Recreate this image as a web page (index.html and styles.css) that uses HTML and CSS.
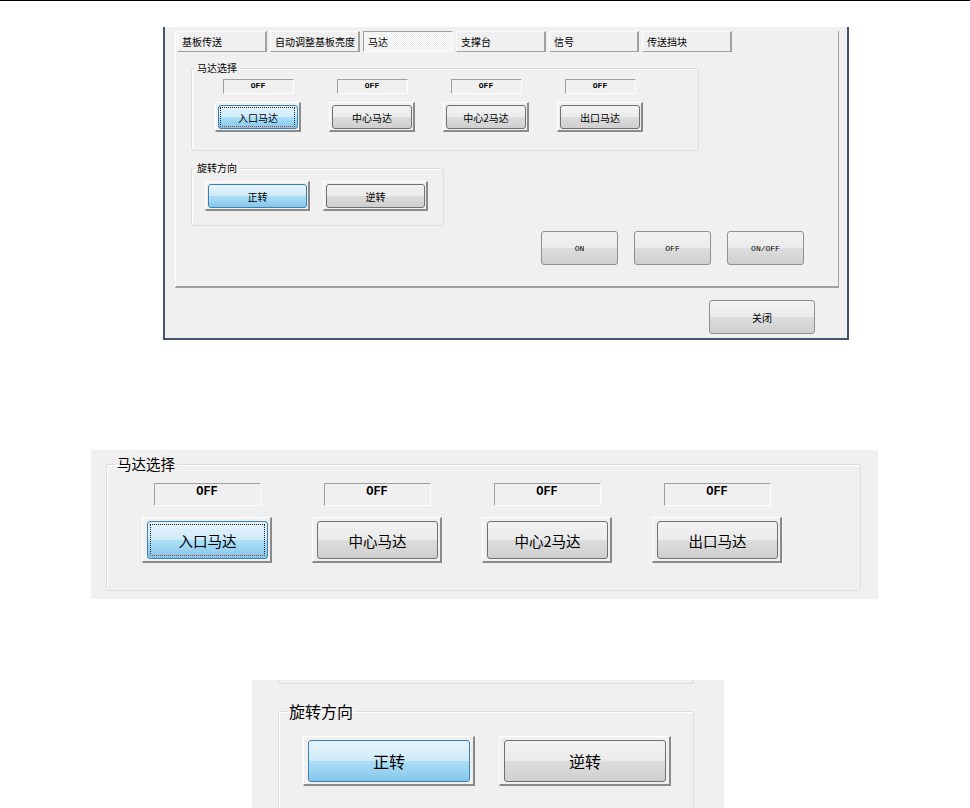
FILE: index.html
```html
<!DOCTYPE html>
<html lang="zh-CN">
<head>
  <meta charset="UTF-8" />
  <title>马达 设定</title>
  <meta name="viewport" content="width=device-width, initial-scale=1.0" />
  <link rel="stylesheet" href="styles.css">
</head>
<body>
  <div class="rule"></div>

  <div class="dialog">
    <div class="tabpanel">
      <div class="tabs">
        <div class="tab">基板传送</div>
        <div class="tab">自动调整基板亮度</div>
        <div class="tab active">马达</div>
        <div class="tab">支撑台</div>
        <div class="tab">信号</div>
        <div class="tab">传送挡块</div>
      </div>

      <div class="page">
        <fieldset class="group motor">
          <legend>马达选择</legend>
          <div class="motor-grid">
            <div class="col">
              <div class="state">OFF</div>
              <button type="button" class="fbtn on focus"><span>入口马达</span></button>
            </div>
            <div class="col">
              <div class="state">OFF</div>
              <button type="button" class="fbtn"><span>中心马达</span></button>
            </div>
            <div class="col">
              <div class="state">OFF</div>
              <button type="button" class="fbtn"><span>中心2马达</span></button>
            </div>
            <div class="col">
              <div class="state">OFF</div>
              <button type="button" class="fbtn"><span>出口马达</span></button>
            </div>
          </div>
        </fieldset>

        <fieldset class="group dir">
          <legend>旋转方向</legend>
          <div class="dir-row">
            <button type="button" class="fbtn on"><span>正转</span></button>
            <button type="button" class="fbtn"><span>逆转</span></button>
          </div>
        </fieldset>

        <div class="actions">
          <button type="button" class="btn mono">ON</button>
          <button type="button" class="btn mono">OFF</button>
          <button type="button" class="btn mono">ON/OFF</button>
        </div>
      </div>
    </div>

    <div class="footer">
      <button type="button" class="btn close">关闭</button>
    </div>
  </div>

  <!-- enlarged: motor select -->
  <div class="zoom zoom-motor">
    <fieldset class="group big">
      <legend>马达选择</legend>
      <div class="motor-grid">
        <div class="col">
          <div class="state">OFF</div>
          <button type="button" class="fbtn on focus"><span>入口马达</span></button>
        </div>
        <div class="col">
          <div class="state">OFF</div>
          <button type="button" class="fbtn"><span>中心马达</span></button>
        </div>
        <div class="col">
          <div class="state">OFF</div>
          <button type="button" class="fbtn"><span>中心2马达</span></button>
        </div>
        <div class="col">
          <div class="state">OFF</div>
          <button type="button" class="fbtn"><span>出口马达</span></button>
        </div>
      </div>
    </fieldset>
  </div>

  <!-- enlarged: rotation -->
  <div class="zoom zoom-dir">
    <div class="group-tail"></div>
    <fieldset class="group big">
      <legend>旋转方向</legend>
      <div class="dir-row">
        <button type="button" class="fbtn on"><span>正转</span></button>
        <button type="button" class="fbtn"><span>逆转</span></button>
      </div>
    </fieldset>
  </div>
</body>
</html>
```

FILE: styles.css
```css
* {
  box-sizing: border-box;
}
body {
  margin: 0;
  background: #fff;
  font-family: "Noto Sans CJK SC", "Noto Sans", sans-serif;
  color: #000;
}
button {
  font-family: inherit;
  color: #000;
  padding: 0;
  margin: 0;
  cursor: default;
}
.rule {
  height: 1px;
  background: #000;
}

/* dialog */
.dialog {
  margin: 26px 0 0 163px;
  padding-top: 4px;
  width: 686px;
  height: 313px;
  background: #f0f0f0;
  border: 2px solid #44546a;
  border-top: 0;
  font-size: 10px;
}
.tabpanel {
  margin-left: 10px;
  width: 664px;
  height: 257px;
  border-left: 1px solid #fff;
  border-right: 1px solid #a0a0a0;
  border-bottom: 2px solid #a0a0a0;
}
.tabs {
  display: flex;
  gap: 3px;
  padding-left: 1px;
}
.tab {
  width: 90px;
  height: 21px;
  line-height: 19px;
  padding-left: 4px;
  border: 1px solid #fff;
  border-right: 2px solid #a0a0a0;
  border-bottom: 1px solid #a0a0a0;
  white-space: nowrap;
}
.tab.active {
  border-color: #a0a0a0 #fff #fff #a0a0a0;
  border-width: 1px;
  background: repeating-conic-gradient(#fff 0 25%, #ececec 0 50%) 0 0 / 2px 2px;
}
.page {
  padding: 10px 0 0 15px;
}

/* group boxes */
.group {
  margin: 0;
  padding: 0;
  min-width: 0;
  border: 1px solid #d5dfe5;
  border-radius: 3px;
  box-shadow: inset 1px 1px #fff;
}
.group legend {
  padding: 0 2px;
  margin-left: 3px;
  line-height: 12px;
}
.motor {
  width: 508px;
  padding: 5px 0 18px;
}
.motor-grid {
  display: grid;
  grid-template-columns: repeat(4, 86px);
  column-gap: 28px;
  padding-left: 23px;
}
.col {
  display: flex;
  flex-direction: column;
  align-items: center;
  gap: 8px;
}
.state {
  width: 71px;
  height: 15px;
  border: 1px solid;
  border-color: #a0a0a0 #fff #fff #a0a0a0;
  text-align: center;
  font: bold 8px/11px "Liberation Mono", monospace;
}
.dir {
  width: 253px;
  margin-top: 11px;
  padding: 7px 0 14px;
}
.dir-row {
  display: flex;
  gap: 13px;
  padding-left: 13px;
}

/* framed buttons */
.fbtn {
  position: relative;
  display: flex;
  width: 86px;
  height: 30px;
  padding: 2px 1px 1px 2px;
  background: #f0f0f0;
  border: 1px solid;
  border-color: #fff #8a8a8a #8a8a8a #fff;
  border-right-width: 2px;
  border-bottom-width: 2px;
  font-size: 10px;
}
.fbtn span {
  flex: 1;
  display: flex;
  align-items: center;
  justify-content: center;
  border: 1px solid #707070;
  border-radius: 3px;
  background: linear-gradient(#f2f2f2, #ebebeb 49%, #dddddd 50%, #cfcfcf);
}
.fbtn.on span {
  border-color: #3c7fb1;
  background: linear-gradient(#e6f4fc, #cfeaf9 49%, #ace0f8 50%, #86c6ea);
}
.fbtn.focus::after {
  content: "";
  position: absolute;
  inset: 4px 4px 3px 4px;
  border: 1px dotted #222;
  border-bottom-color: #c0392b;
}
.dir .fbtn {
  width: 105px;
}

.actions {
  display: flex;
  justify-content: flex-end;
  gap: 16px;
  margin: 5px 34px 0 0;
}
.btn {
  width: 77px;
  height: 34px;
  border: 1px solid #8f8f8f;
  border-radius: 3px;
  background: linear-gradient(#f2f2f2, #ebebeb 49%, #dddddd 50%, #cfcfcf);
  font-size: 10px;
}
.btn.mono {
  font: 8px "Liberation Mono", monospace;
}
.footer {
  display: flex;
  justify-content: flex-end;
  padding: 12px 32px 0 0;
}
.close {
  width: 106px;
}

/* enlarged views */
.zoom {
  background: #f0f0f0;
}
.zoom-motor {
  margin: 110px 0 0 91px;
  width: 787px;
  height: 149px;
  padding: 6px 17px 0 15px;
}
.group.big legend {
  font-size: 14.5px;
  line-height: 16px;
  margin-left: 8px;
}
.zoom-motor .group {
  padding: 11px 0 27px;
}
.zoom-motor .motor-grid {
  grid-template-columns: repeat(4, 130px);
  column-gap: 40px;
  padding-left: 35px;
}
.zoom-motor .col {
  gap: 11px;
}
.zoom-motor .state {
  width: 107px;
  height: 23px;
  font: bold 12px/17px "Liberation Mono", monospace;
}
.zoom-motor .fbtn {
  width: 130px;
  height: 46px;
  padding: 3px 2px 2px 4px;
  font-size: 14.5px;
}
.zoom-motor .fbtn.focus::after {
  inset: 6px 5px 5px 7px;
}

.zoom-dir {
  margin: 81px 0 0 252px;
  width: 472px;
  height: 128px;
  overflow: hidden;
  padding-left: 26px;
}
.group-tail {
  width: 416px;
  height: 4px;
  border: 1px solid #d5dfe5;
  border-top: 0;
  border-radius: 0 0 3px 3px;
}
.zoom-dir .group {
  width: 416px;
  margin-top: 19px;
  padding: 17px 0 30px;
}
.zoom-dir .group legend {
  font-size: 16px;
  margin-left: 8px;
}
.zoom-dir .dir-row {
  gap: 24px;
  padding-left: 24px;
}
.zoom-dir .fbtn {
  width: 172px;
  height: 50px;
  padding: 3px 3px 2px 4px;
  font-size: 16px;
}
```
